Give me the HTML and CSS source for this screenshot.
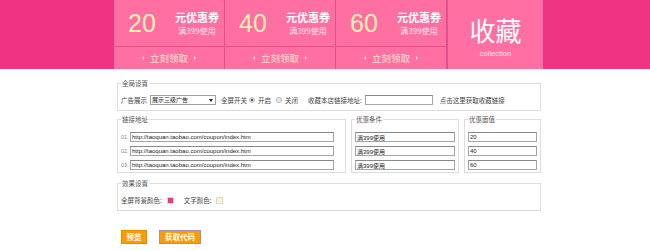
FILE: index.html
```html
<!DOCTYPE html>
<html lang="zh-CN">
<head>
<meta charset="utf-8">
<title>优惠券设置</title>
<link rel="stylesheet" href="styles.css">
</head>
<body>
<header class="top">
  <div class="top-inner">
    <div class="coupon">
      <div class="c-main"><span class="c-num">20</span><div class="c-info"><b>元优惠券</b><span>满399使用</span></div></div>
      <div class="c-get"><span class="tri tri-l"></span>立刻领取<span class="tri tri-r"></span></div>
    </div>
    <div class="coupon">
      <div class="c-main"><span class="c-num">40</span><div class="c-info"><b>元优惠券</b><span>满399使用</span></div></div>
      <div class="c-get"><span class="tri tri-l"></span>立刻领取<span class="tri tri-r"></span></div>
    </div>
    <div class="coupon">
      <div class="c-main"><span class="c-num">60</span><div class="c-info"><b>元优惠券</b><span>满399使用</span></div></div>
      <div class="c-get"><span class="tri tri-l"></span>立刻领取<span class="tri tri-r"></span></div>
    </div>
    <div class="collect"><div class="col-big">收藏</div><div class="col-en">collection</div></div>
  </div>
</header>
<main class="panel">
  <fieldset class="box box-global">
    <legend>全局设置</legend>
    <div class="row">
      <span>广告展示</span>
      <span class="sel-wrap"><select class="sel"><option>展示三级广告</option></select></span>
      <span class="ml5">全屏开关</span>
      <label class="radio"><input type="radio" name="fs" checked><span>开启</span></label>
      <label class="radio"><input type="radio" name="fs"><span>关闭</span></label>
      <span class="ml10">收藏本店链接地址:</span>
      <input class="txt txt-fav" type="text">
      <span class="ml7">点击这里获取收藏链接</span>
    </div>
  </fieldset>
  <div class="cols">
    <fieldset class="box box-col box-link">
      <legend>链接地址</legend>
      <div class="line"><span class="num">01.</span><input class="txt txt-link" type="text" value="http://taoquan.taobao.com/coupon/index.htm"></div>
      <div class="line"><span class="num">02.</span><input class="txt txt-link" type="text" value="http://taoquan.taobao.com/coupon/index.htm"></div>
      <div class="line"><span class="num">03.</span><input class="txt txt-link" type="text" value="http://taoquan.taobao.com/coupon/index.htm"></div>
    </fieldset>
    <fieldset class="box box-col box-cond">
      <legend>优惠条件</legend>
      <div class="line"><input class="txt txt-full" type="text" value="满399使用"></div>
      <div class="line"><input class="txt txt-full" type="text" value="满399使用"></div>
      <div class="line"><input class="txt txt-full" type="text" value="满399使用"></div>
    </fieldset>
    <fieldset class="box box-col box-val">
      <legend>优惠面值</legend>
      <div class="line"><input class="txt txt-full" type="text" value="20"></div>
      <div class="line"><input class="txt txt-full" type="text" value="40"></div>
      <div class="line"><input class="txt txt-full" type="text" value="60"></div>
    </fieldset>
  </div>
  <fieldset class="box box-effect">
    <legend>效果设置</legend>
    <div class="row">
      <span>全屏背景颜色:</span><span class="swatch swatch-bg"></span>
      <span class="ml10">文字颜色:</span><span class="swatch swatch-text"></span>
    </div>
  </fieldset>
  <div class="actions">
    <button class="btn btn-preview" type="button">预览</button>
    <button class="btn btn-code" type="button">获取代码</button>
  </div>
</main>
</body>
</html>
```
FILE: styles.css
```css
* { box-sizing: border-box; }
body {
  margin: 0;
  background: #fff;
  font-family: "Noto Sans CJK SC", "Liberation Sans", sans-serif;
  color: #333;
}

/* header */
.top { height: 69px; background: #ee3482; }
.top-inner { display: flex; height: 69px; margin-left: 114px; }
.coupon {
  width: 111px;
  background: #ff6fa1;
  border-right: 1px solid #e4508b;
  display: flex;
  flex-direction: column;
}
.c-main {
  height: 47px;
  border-bottom: 1px solid #e4508b;
  display: flex;
  align-items: center;
  padding-left: 14px;
}
.c-num {
  font-family: "Liberation Sans", sans-serif;
  font-size: 25px;
  line-height: 1;
  color: #fff1b0;
  width: 30px;
  margin-top: 1px;
}
.c-info {
  display: flex;
  flex-direction: column;
  align-items: center;
  margin-left: 17px;
  width: 44px;
}
.c-info b { font-size: 11px; line-height: 13px; color: #fff; font-weight: bold; white-space: nowrap; }
.c-info span { font-size: 8px; line-height: 10px; color: #ffe3ec; margin-top: 2px; white-space: nowrap; }
.c-get {
  flex: 1;
  display: flex;
  align-items: center;
  justify-content: center;
  gap: 6px;
  font-size: 9.5px;
  color: #ffe6d2;
}
.tri { width: 0; height: 0; border-top: 2px solid transparent; border-bottom: 2px solid transparent; }
.tri-l { border-right: 2px solid #ffe6d2; }
.tri-r { border-left: 2px solid #ffe6d2; }

.collect {
  width: 96px;
  background: #ff6fa1;
  border-left: 1px solid #e4508b;
  display: flex;
  flex-direction: column;
  align-items: center;
  padding-top: 16px;
}
.col-big { font-size: 26px; line-height: 28px; color: #fff; }
.col-en { font-family: "Liberation Sans", sans-serif; font-size: 7.5px; line-height: 7px; color: #ffe3ec; margin-top: 6px; }

/* panel */
.panel { width: 424px; margin-left: 117px; padding-top: 10px; font-size: 6.5px; }
.box {
  margin: 0;
  min-width: 0;
  border: 1px solid #dcdcdc;
  padding: 7px 3px 5px;
}
.box legend { padding: 0 1px; font-size: 6.5px; line-height: 9px; color: #555; }
.row { display: flex; align-items: center; height: 10px; white-space: nowrap; color: #444; }
.ml5 { margin-left: 5px; }
.ml7 { margin-left: 7px; }
.ml10 { margin-left: 10px; }

.sel-wrap { position: relative; margin-left: 3px; display: inline-flex; }
.sel {
  appearance: none;
  -webkit-appearance: none;
  width: 66px;
  height: 10px;
  border: 1px solid #a0a0a0;
  background: #fff;
  font-family: "Noto Sans CJK SC", sans-serif;
  font-size: 6px;
  line-height: 8px;
  padding: 0 1px;
  color: #222;
  border-radius: 0;
}
.sel-wrap::after {
  content: "";
  position: absolute;
  right: 3px;
  top: 4px;
  border-left: 2px solid transparent;
  border-right: 2px solid transparent;
  border-top: 3px solid #222;
}

.radio { display: inline-flex; align-items: center; margin-left: 2px; }
.radio + .radio { margin-left: 5px; }
.radio input {
  appearance: none;
  -webkit-appearance: none;
  width: 6px;
  height: 6px;
  margin: 0 3px 0 0;
  border: 1px solid #b5b5b5;
  border-radius: 50%;
  background: #eee;
}
.radio input:checked { background: radial-gradient(circle, #555 0 1.2px, #eee 1.6px); }

.txt {
  height: 10px;
  border: 1px solid #a5a5a5;
  border-top-color: #888;
  padding: 0 1px;
  font-family: "Liberation Sans", "Noto Sans CJK SC", sans-serif;
  font-size: 6px;
  line-height: 8px;
  color: #222;
  background: #fff;
  border-radius: 0;
  margin: 0;
}
.txt-fav { width: 68px; margin-left: 3px; }

.cols { display: flex; justify-content: space-between; margin-top: 4px; }
.box-col { padding: 8px 3px 2px; }
.box-link { width: 229px; }
.box-cond { width: 108px; }
.box-val { width: 77px; }
.line { display: flex; align-items: center; height: 10px; margin-bottom: 4px; }
.line:last-child { margin-bottom: 0; }
.num { font-family: "Liberation Sans", sans-serif; font-size: 5.5px; color: #888; width: 9px; }
.txt-link { width: 204px; }
.txt-full { width: 100%; }

.box-effect { margin-top: 6px; padding: 7px 3px 5px; }
.swatch { width: 7px; height: 7px; border: 1px solid #c9c9c9; margin-left: 5px; }
.swatch-bg { background: #ee3482; border-color: #d8d8d8; }
.swatch-text { background: #fff3cc; border-color: #d8d8d8; margin-left: 4px; }

.actions { display: flex; gap: 12px; margin-top: 19px; padding-left: 4px; }
.btn {
  height: 14px;
  padding: 0;
  margin: 0;
  background: #ff9a00;
  border: 1px solid #e88a00;
  color: #fff;
  font-family: "Noto Sans CJK SC", sans-serif;
  font-weight: bold;
  font-size: 7.5px;
  line-height: 12px;
  border-radius: 0;
}
.btn-preview { width: 26px; }
.btn-code { width: 42px; border-color: #9a93a8; }
```
